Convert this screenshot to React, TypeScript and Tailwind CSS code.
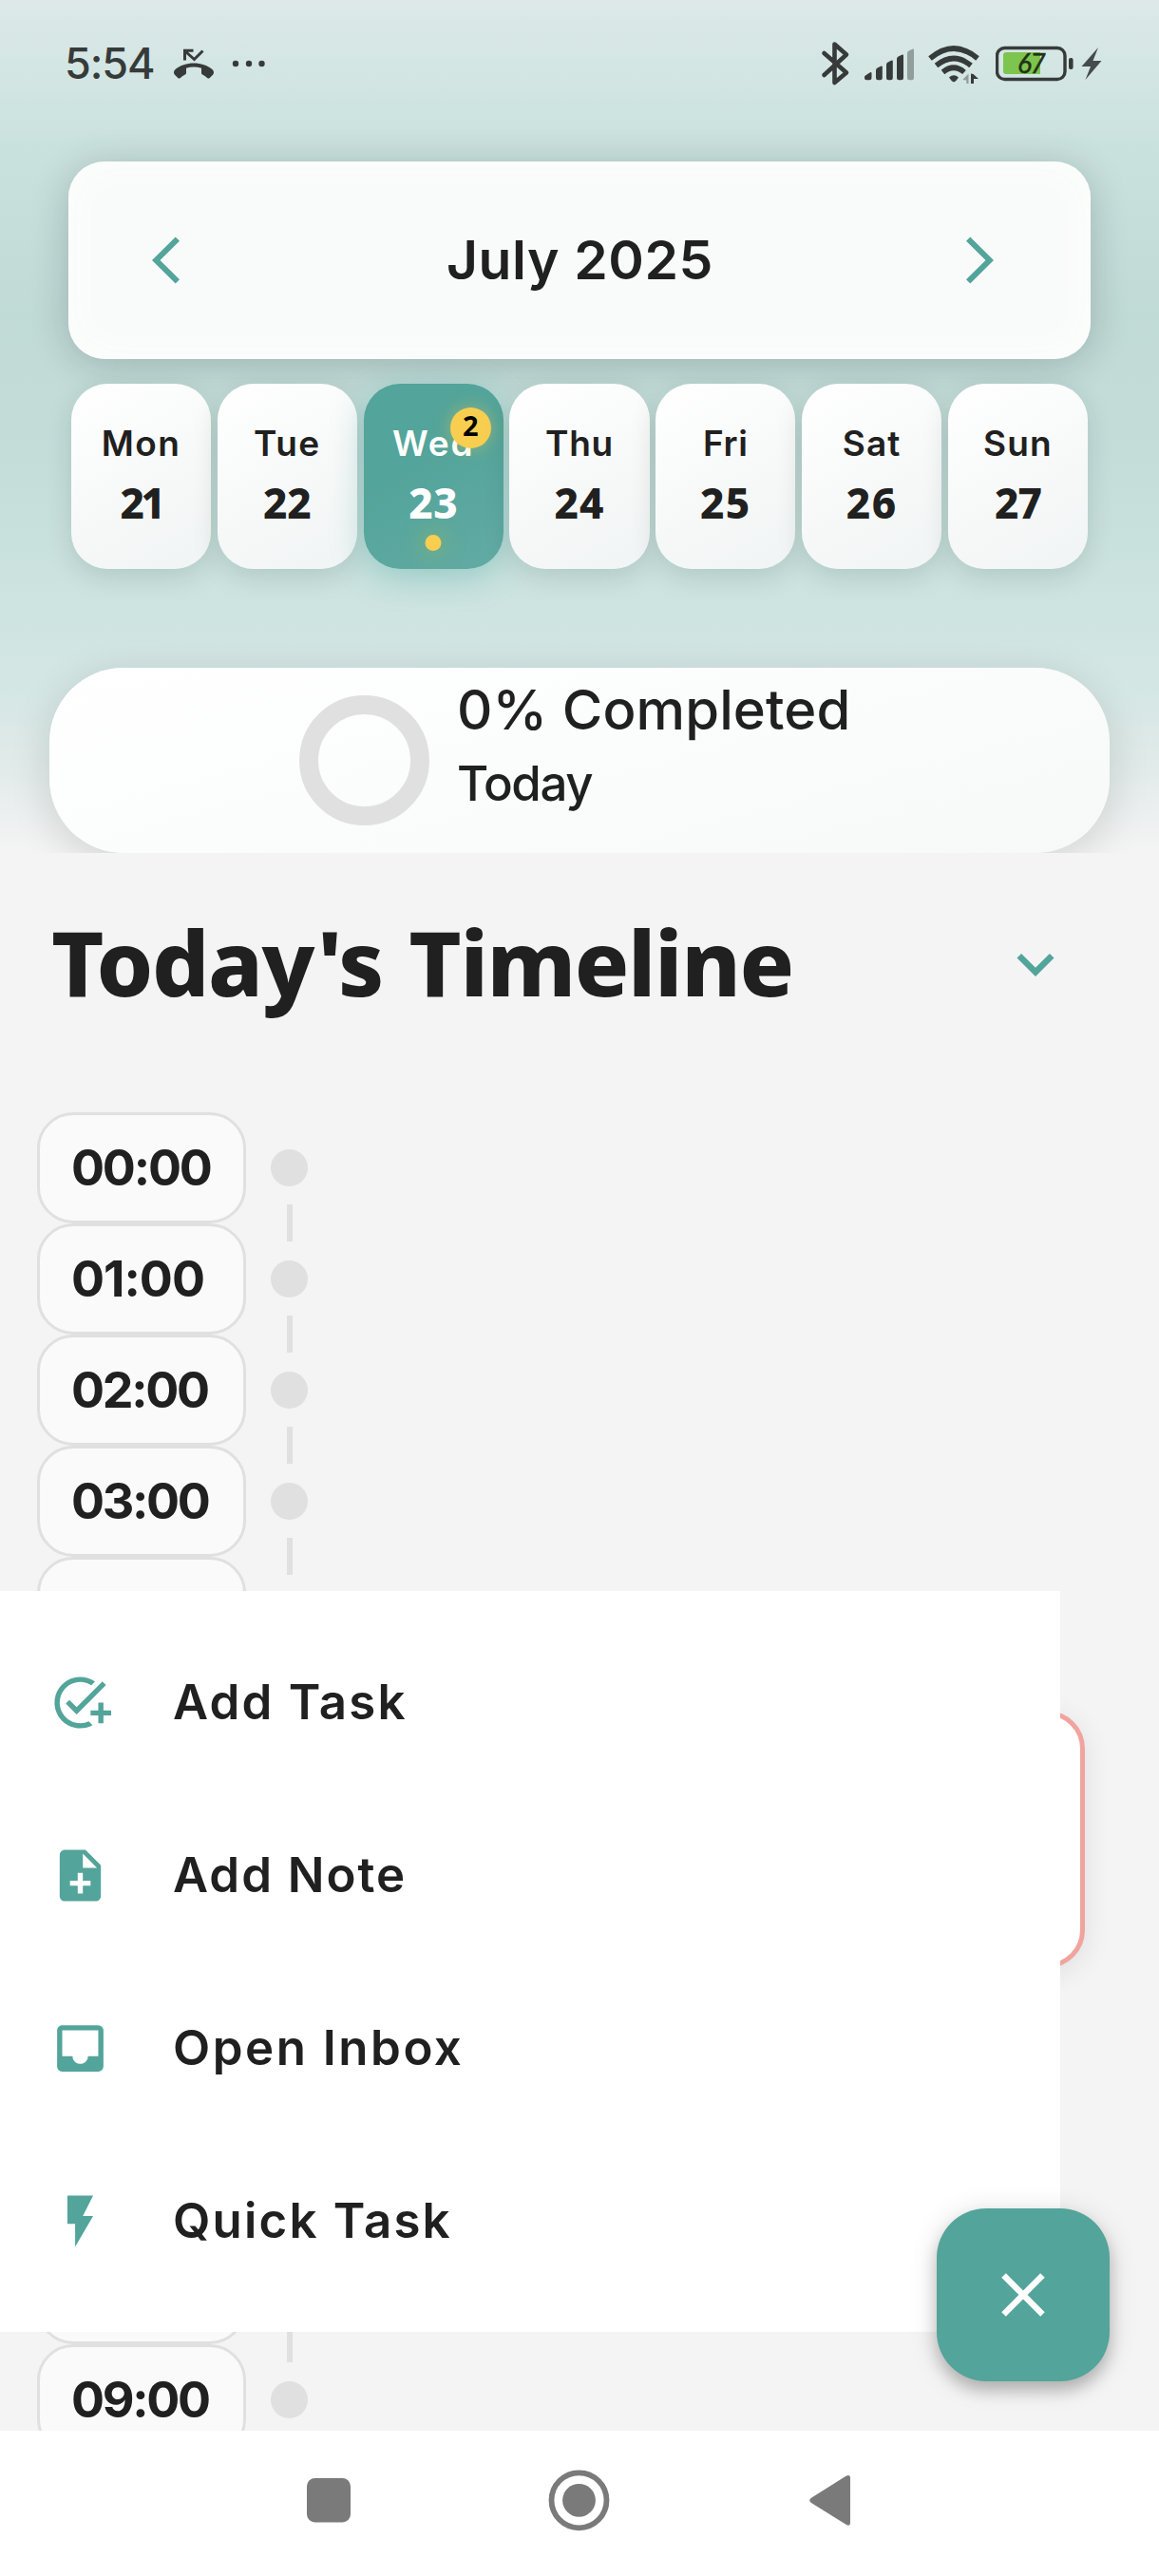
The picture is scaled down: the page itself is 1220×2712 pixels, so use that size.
import React from "react";
import { MdAddTask, MdNoteAdd, MdInbox, MdFlashOn, MdClose, MdKeyboardArrowDown } from "react-icons/md";

const GEO = "font-['Inter',sans-serif]";
const HUM = "font-['Noto_Sans',sans-serif]";

const days = [
  { name: "Mon", num: "21", nameCls: "tracking-[1.400px]", numCls: "tracking-[-3.500px]" },
  { name: "Tue", num: "22", nameCls: "tracking-[1.500px]", numCls: "tracking-[0px]" },
  { name: "Wed", num: "23", nameCls: "tracking-[1.800px]", numCls: "tracking-[0.5px]", selected: true },
  { name: "Thu", num: "24", nameCls: "tracking-[0.800px]", numCls: "tracking-[1px]" },
  { name: "Fri", num: "25", nameCls: "tracking-[0.600px]", numCls: "tracking-[1.5px]" },
  { name: "Sat", num: "26", nameCls: "tracking-[1.200px]", numCls: "tracking-[1.5px]" },
  { name: "Sun", num: "27", nameCls: "tracking-[1.200px]", numCls: "tracking-[-1px]" },
];

const hours = [
  { t: "00:00", cls: "tracking-[-2.200px]" },
  { t: "01:00", cls: "tracking-[-1px]" },
  { t: "02:00", cls: "tracking-[-2.300px]" },
  { t: "03:00", cls: "tracking-[-2.300px]" },
  { t: "04:00", cls: "tracking-[-2.300px]" },
];

function StatusBar() {
  return (
    <div className="flex h-[170px] items-start pl-[68px] pr-[60px] pt-[39px] text-[#363b3a]">
      <div className={`${GEO} h-[56px] w-[115px] whitespace-nowrap text-[45px] font-medium leading-[56px] tracking-[-1.090px]`}>5:54</div>
      <svg width="42" height="56" viewBox="183 39 42 56" fill="currentColor">
        <path d="M183 76.5c0-1.4.6-2.5 1.6-3.4 5-4.300 12-6.600 19.400-6.600s14.400 2.300 19.400 6.600c1 .9 1.600 2 1.600 3.400 0 1-.4 1.700-1 2.300l-3.200 3.200c-.9.8-1.800.8-2.700 0-1.500-1.400-3.300-2.500-5-3.400-.7-.4-1.100-1-1.100-1.900v-5c-2.500-.8-5.200-1.200-8-1.200s-5.500.4-8 1.200v5c0 .9-.4 1.500-1.100 1.900-1.800.9-3.500 2-5 3.400-.9.8-1.800.8-2.700 0l-3.200-3.200c-.6-.6-1-1.300-1-2.300z" />
        <path d="M194.500 63.500V53.300H203.500M195 54l9.500 8.500 9-9" fill="none" stroke="currentColor" strokeWidth="3" />
      </svg>
      <svg className="ml-[19px]" width="36" height="56" viewBox="0 0 36 56" fill="currentColor">
        <circle cx="4" cy="28" r="3.200" /><circle cx="18" cy="28" r="3.200" /><circle cx="31.500" cy="28" r="3.200" />
      </svg>
      <div className="flex-1" />
      <svg width="31" height="56" viewBox="864 39 31 56" fill="none" stroke="currentColor" strokeWidth="4.600" strokeLinejoin="round" strokeLinecap="round">
        <path d="M867.500 56L891 76.500 878.500 87V46.500L891 57.500 867.500 79" />
      </svg>
      <svg className="ml-[14px]" width="54" height="56" viewBox="909 39 54 56" fill="currentColor">
        <path d="M910 81q0-1 1-1.600l4.500-3q2-1.100 2 .8V82q0 2.200-2.200 2.200h-3.200Q910 84.200 910 82z" />
        <path d="M922 74q0-1.600 1.200-2.300l3.800-2q1.800-.8 1.800.8V82q0 2.200-2.200 2.200h-2.400Q922 84.200 922 82z" />
        <path d="M933 68q0-1.600 1.200-2.300l3.800-2q1.800-.8 1.800.8V82q0 2.200-2.200 2.200h-2.400Q933 84.200 933 82z" />
        <path d="M944 62q0-1.600 1.200-2.300l4-2q1.800-.8 1.800.8V82q0 2.200-2.200 2.200h-2.600Q944 84.200 944 82z" />
        <path opacity=".42" d="M955 56q0-1.600 1.200-2.300l4-2q1.800-.8 1.800.8V82q0 2.200-2.200 2.200h-2.600Q955 84.200 955 82z" />
      </svg>
      <svg className="ml-[14px]" width="54" height="56" viewBox="977 39 54 56" fill="none" stroke="currentColor" strokeWidth="5.600">
        <path d="M979 61.500Q1004 40.500 1029 61.500" />
        <path d="M985.500 69Q1004 54 1022 69" />
        <path d="M992.500 76Q1004 66.500 1015 76" />
        <path d="M999 81.500q5-4.500 10 0-2 3.500-5 5-3-1.500-5-5z" fill="currentColor" stroke="none" />
        <path d="M1019.500 77.500V88h-2.200v-3.500l-4-.5z" fill="currentColor" opacity=".42" stroke="none" />
        <path d="M1022 88V77.500l2.500.5 5.500 5h-5V88z" fill="currentColor" stroke="none" />
      </svg>
      <svg className="ml-[17px]" width="112" height="56" viewBox="1048 39 112 56">
        <rect x="1049.500" y="50.500" width="71.500" height="33" rx="8" fill="none" stroke="#363b3a" strokeWidth="3.400" />
        <path d="M1059 55h36v23h-36q-3 0-3-3V58q0-3 3-3z" fill="#7dc54e" />
        <rect x="1125" y="61" width="4.600" height="12" rx="2" fill="#363b3a" />
        <path d="M1156 50L1138.500 70h9.500l-5.500 14L1159.500 64h-9z" fill="#464c4b" />
        <text x="1071" y="76.600" fontFamily="Lato, sans-serif" fontSize="28" fontStyle="italic" fontWeight="400" letterSpacing="-1.500" fill="#1f3316" stroke="#1f3316" strokeWidth=".5">67</text>
      </svg>
    </div>
  );
}

function MonthCard() {
  return (
    <div className="mx-[72px] flex h-[208px] items-center justify-between rounded-[38px] bg-[#f9fbfa] pl-[86px] pr-[101px] shadow-[inset_0_0_44px_#fdfefd,0_5px_40px_rgba(0,20,15,0.2)]">
      <svg width="32" height="50" viewBox="0 0 32 50" fill="#53a49a"><path d="M26.700.5L31 4.700 10.500 25 31 45.300 26.700 49.500 2 25z" /></svg>
      <div className={`${GEO} ml-[14px] whitespace-nowrap text-[57px] font-semibold leading-[70px] tracking-[0.600px] text-[#202020]`}>July 2025</div>
      <svg width="30" height="50" viewBox="0 0 30 50" fill="#53a49a"><path d="M4.300.5L0 4.700 20.500 25 0 45.300 4.300 49.500 29 25z" /></svg>
    </div>
  );
}

function DayRow() {
  return (
    <div className="mx-[75px] mt-[26px] flex gap-[6.800px]">
      {days.map((d) => (
        <div
          key={d.name}
          className={
            d.selected
              ? "relative flex h-[195px] flex-1 flex-col items-center rounded-[38px] bg-linear-150 from-[#53a49a] from-40% to-[#62aba4] pt-[42px] text-white shadow-[0_8px_34px_rgba(70,165,160,0.4)]"
              : "relative flex h-[195px] flex-1 flex-col items-center rounded-[38px] bg-linear-150 from-white via-[#f7f9f8] via-55% to-[#f0f4f4] pt-[42px] text-[#202020] shadow-[0_8px_28px_rgba(0,30,25,0.13)]"
          }
        >
          <div className={`${GEO} text-[37px] font-semibold leading-[42px] ${d.nameCls}`}>{d.name}</div>
          <div className={`${HUM} mt-[18px] text-[44px] font-extrabold leading-[46px] ${d.numCls}`}>{d.num}</div>
          {d.selected && (
            <>
              <div className={`${HUM} absolute right-[13px] top-[25px] flex size-[43px] items-center justify-center rounded-full bg-[#f8ce51] pb-[7px] text-[29px] font-bold leading-none text-black shadow-[0_0_18px_rgba(248,206,81,0.4)]`}>2</div>
              <div className="absolute bottom-[19px] left-1/2 size-[17px] -translate-x-1/2 rounded-full bg-[#f8ce51] shadow-[0_0_22px_4px_rgba(180,190,70,0.35)]" />
            </>
          )}
        </div>
      ))}
    </div>
  );
}

function ProgressCard() {
  return (
    <div className="mx-[52px] mt-[104px] flex h-[195px] rounded-[78px] bg-linear-165 from-white via-[#fafcfb] via-60% to-[#f7f9f9] pl-[263px] shadow-[0_10px_44px_rgba(0,20,15,0.14)]">
      <div className="mt-[29px] size-[137px] shrink-0 rounded-full border-[20px] border-[#e0e0e0]" />
      <div className={`${GEO} ml-[29px] whitespace-nowrap text-[#202020]`}>
        <div className="mt-[4px] text-[58px] font-[450] leading-[80px] tracking-[0.100px]">0% Completed</div>
        <div className="mt-[1px] text-[51px] font-[450] leading-[74px] tracking-[-1.400px]">Today</div>
      </div>
    </div>
  );
}

function HourRow({ label, cls, tall }: { label: string; cls: string; tall?: boolean }) {
  return (
    <div className={tall ? "flex h-[712px] items-end" : "flex h-[117px] items-start"}>
      <div className={`${GEO} ml-[39px] flex h-[117px] w-[220px] items-center rounded-[38px] border-[3px] border-[#e0e0e0] bg-[#fafafa] pl-[33px] text-[52px] font-bold leading-none text-[#202020] ${cls}`}>{label}</div>
      <div className="relative ml-[26px] h-[117px] w-[39px]">
        <div className="mt-[39px] size-[39px] rounded-full bg-[#e0e0e0]" />
        <div className="ml-[17px] mt-[19px] h-[39px] w-[6px] bg-[#e0e0e0]" />
      </div>
    </div>
  );
}

const actions = [
  { label: "Add Task", Icon: MdAddTask, cls: "tracking-[2.200px]" },
  { label: "Add Note", Icon: MdNoteAdd, cls: "tracking-[2px]" },
  { label: "Open Inbox", Icon: MdInbox, cls: "tracking-[2.500px]" },
  { label: "Quick Task", Icon: MdFlashOn, cls: "tracking-[2.200px]" },
];

function ActionMenu() {
  return (
    <div className="absolute left-0 top-[1675px] h-[780px] w-[1116px] bg-white py-[26px]">
      {actions.map(({ label, Icon, cls }) => (
        <div key={label} className="flex h-[182px] items-center pl-[52px]">
          <Icon size={65} color="#53a49a" />
          <div className={`${GEO} ml-[65px] whitespace-nowrap text-[51px] font-semibold leading-[60px] text-[#202020] ${cls}`}>{label}</div>
        </div>
      ))}
    </div>
  );
}

export default function App() {
  return (
    <div className="relative flex h-[2712px] w-[1220px] flex-col overflow-hidden bg-[#f4f4f4]">
      <header className="h-[898px] shrink-0 overflow-hidden bg-linear-[180deg,#dce9e8_0px,#cae2de_150px,#c0dad6_330px,#c4ddd9_480px,#cce3df_620px,#d6e7e5_740px,#e2ebea_810px,#f4f4f4_898px]">
        <StatusBar />
        <MonthCard />
        <DayRow />
        <ProgressCard />
      </header>
      <main className="min-h-0 flex-1 overflow-hidden">
        <div className="flex h-[273px] items-start justify-between pl-[54px] pr-[91px]">
          <h1 className={`${HUM} mt-[54px] whitespace-nowrap text-[95px] font-extrabold leading-[120px] tracking-[-1.400px] text-[#202020] [word-spacing:4px]`}>Today's Timeline</h1>
          <MdKeyboardArrowDown className="mt-[78px]" size={78} color="#53a49a" />
        </div>
        <div className="relative">
          {hours.map((h) => (
            <HourRow key={h.t} label={h.t} cls={h.cls} />
          ))}
          <div className="relative">
            <div className="absolute left-[330px] top-[45px] h-[271px] w-[812px] rounded-[40px] border-[5px] border-[#f0a49d] bg-white shadow-[0_6px_30px_rgba(0,0,0,0.09)]" />
            <HourRow label="08:00" cls="tracking-[-2.300px]" tall />
          </div>
          <HourRow label="09:00" cls="tracking-[-2.300px]" />
        </div>
      </main>
      <nav className="flex h-[153px] shrink-0 items-center justify-center bg-white pb-[8px]">
        <svg className="-ml-[2px]" width="574" height="66" viewBox="322 2598 574 66" fill="#7a7a7a">
          <rect x="323" y="2608" width="46" height="46.500" rx="8.500" />
          <circle cx="609.500" cy="2631.300" r="29" fill="none" stroke="#7a7a7a" strokeWidth="5.800" />
          <circle cx="609.500" cy="2631.300" r="17.400" />
          <path d="M854 2628.800L890.500 2605.800q4.500-2.500 4.500 1.800V2655q0 4.300-4.500 1.800L854 2634q-3.500-2.600 0-5.200z" />
        </svg>
      </nav>
      <ActionMenu />
      <button className="absolute left-[986px] top-[2325px] flex size-[182px] items-center justify-center rounded-[52px] bg-[#53a49a] shadow-[0_10px_16px_rgba(0,0,0,0.2),0_4px_30px_rgba(0,0,0,0.14)]">
        <MdClose size={78} color="#ffffff" />
      </button>
    </div>
  );
}
